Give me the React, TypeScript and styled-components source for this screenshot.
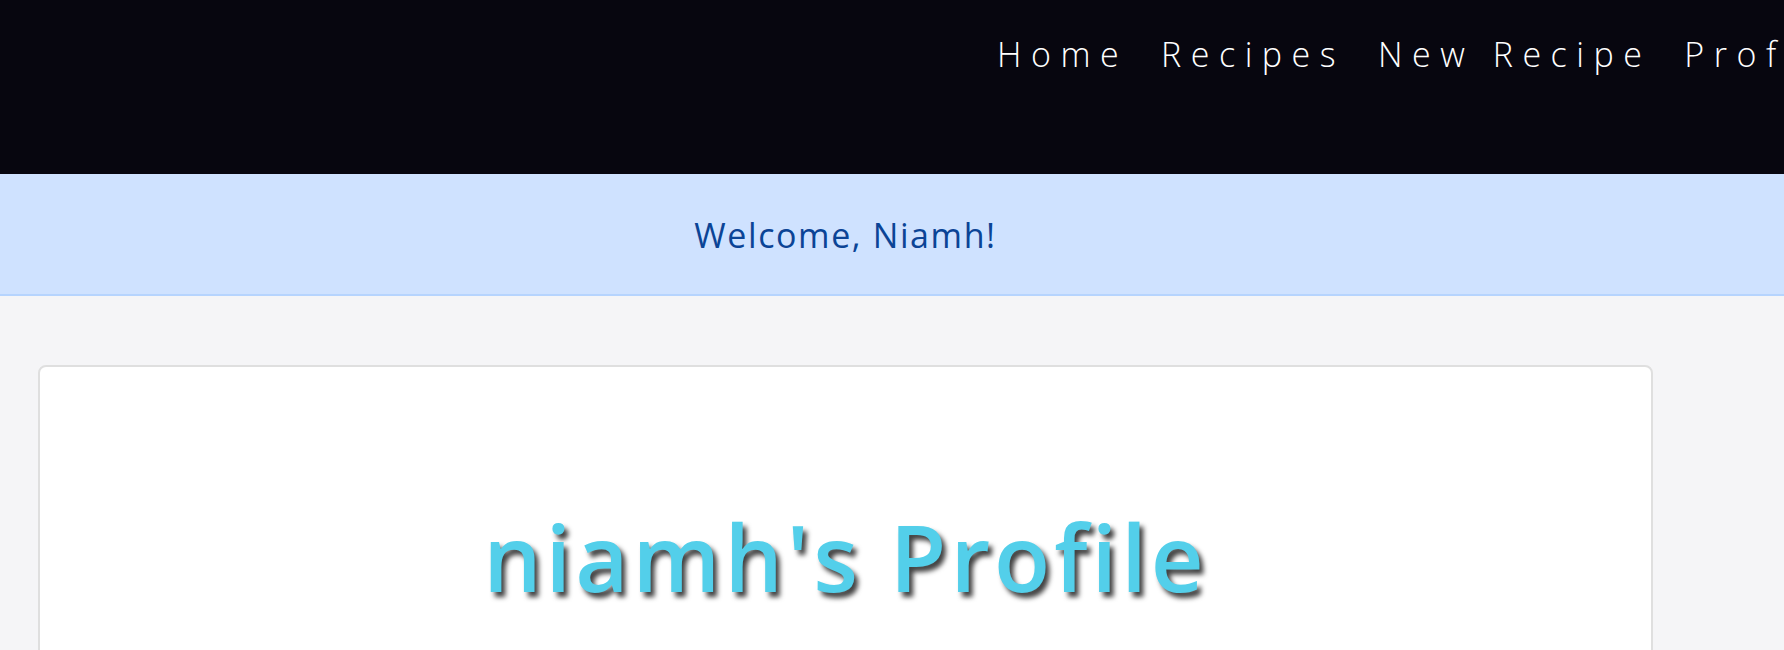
import React from "react";
import styled, { createGlobalStyle } from "styled-components";

const GlobalStyle = createGlobalStyle`
  html, body {
    margin: 0;
    padding: 0;
    background: #f5f5f7;
    font-family: "Open Sans", "Liberation Sans", sans-serif;
    overflow: hidden;
  }
  * { box-sizing: border-box; }
`;

const NavBar = styled.nav`
  height: 174px;
  background: #07060f;
  display: flex;
  align-items: flex-start;
  padding: 31px 0 0 997px;
  overflow: hidden;
  white-space: nowrap;
`;

const NavLinks = styled.ul`
  display: flex;
  gap: 33px;
  margin: 0;
  padding: 0;
  list-style: none;
`;

const NavLink = styled.a`
  color: #ffffff;
  font-family: "Open Sans", "Liberation Sans", sans-serif;
  font-weight: 300;
  font-size: 34px;
  line-height: 46px;
  letter-spacing: 9.5px;
  text-decoration: none;
`;

const Banner = styled.div`
  background: #cfe2ff;
  border-bottom: 2px solid #b6d4fe;
  padding: 38px 0 36px;
`;

const BannerInner = styled.div`
  width: 1615px;
  margin-left: 38px;
  text-align: center;
  color: #0b4496;
  font-size: 34px;
  line-height: 46px;
  letter-spacing: 1.6px;
`;

const Main = styled.main`
  padding: 69px 0 0 38px;
`;

const Card = styled.section`
  width: 1615px;
  min-height: 360px;
  background: #ffffff;
  border: 2px solid #dfdfdf;
  border-radius: 8px;
  padding-top: 135px;
`;

const Title = styled.h1`
  margin: 0;
  text-align: center;
  color: #53cfea;
  font-family: "Open Sans", "Liberation Sans", sans-serif;
  font-weight: 550;
  font-size: 92px;
  line-height: 110px;
  letter-spacing: 4px;
  text-shadow: 4px 5px 5px rgba(0, 0, 0, 0.75);
`;

const links = ["Home", "Recipes", "New Recipe", "Profile", "Logout"];

export default function App() {
  return (
    <>
      <GlobalStyle />
      <NavBar>
        <NavLinks>
          {links.map((l) => (
            <li key={l}>
              <NavLink href="#">{l}</NavLink>
            </li>
          ))}
        </NavLinks>
      </NavBar>
      <Banner>
        <BannerInner>Welcome, Niamh!</BannerInner>
      </Banner>
      <Main>
        <Card>
          <Title>niamh's Profile</Title>
        </Card>
      </Main>
    </>
  );
}
